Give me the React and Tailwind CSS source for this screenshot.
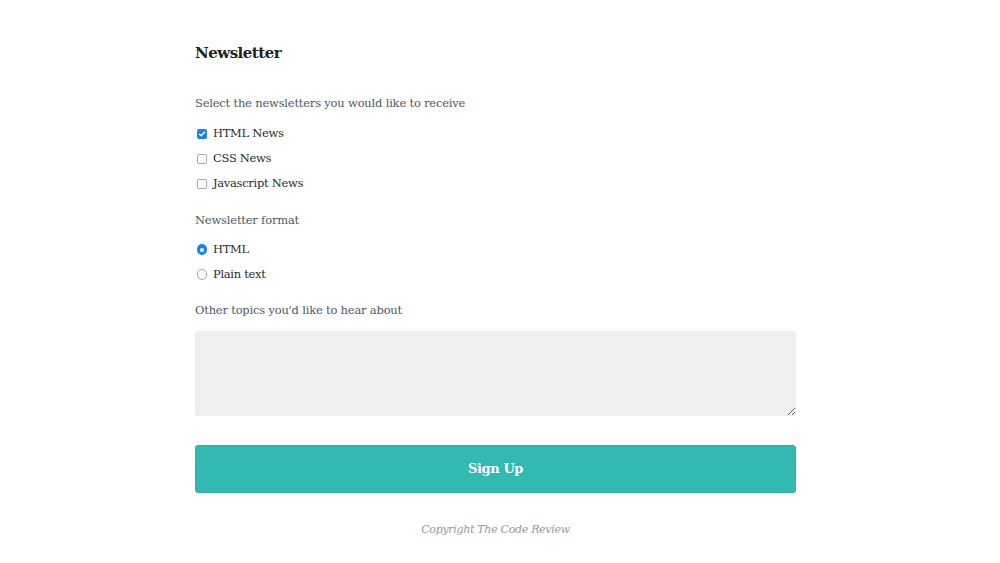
import React from "react";

const serif = { fontFamily: '"DejaVu Serif", "Liberation Serif", serif' };

function Check({ checked }) {
  return checked ? (
    <span className="flex h-[10px] w-[10px] items-center justify-center rounded-[2px] bg-[#1a82f0]">
      <svg width="8" height="8" viewBox="0 0 8 8">
        <path d="M1.5 4.2 L3.2 5.8 L6.5 2.2" stroke="white" strokeWidth="1.4" fill="none" strokeLinecap="round" strokeLinejoin="round" />
      </svg>
    </span>
  ) : (
    <span className="block h-[10px] w-[10px] rounded-[2px] border border-[#a8a8a8] bg-white" />
  );
}

function Radio({ checked }) {
  return checked ? (
    <span className="flex h-[11px] w-[11px] items-center justify-center rounded-full bg-[#1a82f0]">
      <span className="block h-[4px] w-[4px] rounded-full bg-white" />
    </span>
  ) : (
    <span className="block h-[11px] w-[11px] rounded-full border border-[#a8a8a8] bg-white" />
  );
}

function Row({ children, control }) {
  return (
    <div className="flex h-[25px] items-center">
      <span className="ml-[2px] mr-[6px] flex w-[10px] items-center justify-center">{control}</span>
      <span className="text-[11.5px] leading-[25px] tracking-[-0.3px] text-[#2b2b2b]">{children}</span>
    </div>
  );
}

export default function App() {
  return (
    <div className="min-h-[563px] w-[1000px] bg-white" style={serif}>
      <div className="w-[991px]">
        <div className="mx-auto w-[601px] pt-[41px]">
          <h1 className="text-[15px] font-bold leading-[24px] tracking-[-0.5px] text-[#222]">Newsletter</h1>
          <p className="mt-[28px] text-[11.5px] leading-[20px] tracking-[-0.2px] text-[#4f5964]">
            Select the newsletters you would like to receive
          </p>
          <div className="mt-[8px]">
            <Row control={<Check checked />}>HTML News</Row>
            <Row control={<Check />}>CSS News</Row>
            <Row control={<Check />}>Javascript News</Row>
          </div>
          <p className="mt-[14px] text-[11.5px] leading-[20px] tracking-[-0.2px] text-[#4f5964]">Newsletter format</p>
          <div className="mt-[7px]">
            <Row control={<Radio checked />}>HTML</Row>
            <Row control={<Radio />}>Plain text</Row>
          </div>
          <p className="mt-[13px] text-[11.5px] leading-[20px] tracking-[-0.2px] text-[#4f5964]">
            Other topics you'd like to hear about
          </p>
          <textarea
            className="mt-[11px] block h-[85px] w-full rounded-[3px] bg-[#eeeff1] outline-none"
            style={serif}
          />
          <button
            className="mt-[29px] block h-[48px] w-full rounded-[3px] border border-[#2eb0a8] bg-[#32b9b1] text-[13px] font-bold tracking-[-0.4px] text-white"
            style={serif}
          >
            Sign Up
          </button>
          <p className="mt-[27px] text-center text-[11px] italic leading-[20px] tracking-[-0.3px] text-[#999]">
            Copyright The Code Review
          </p>
        </div>
      </div>
    </div>
  );
}
